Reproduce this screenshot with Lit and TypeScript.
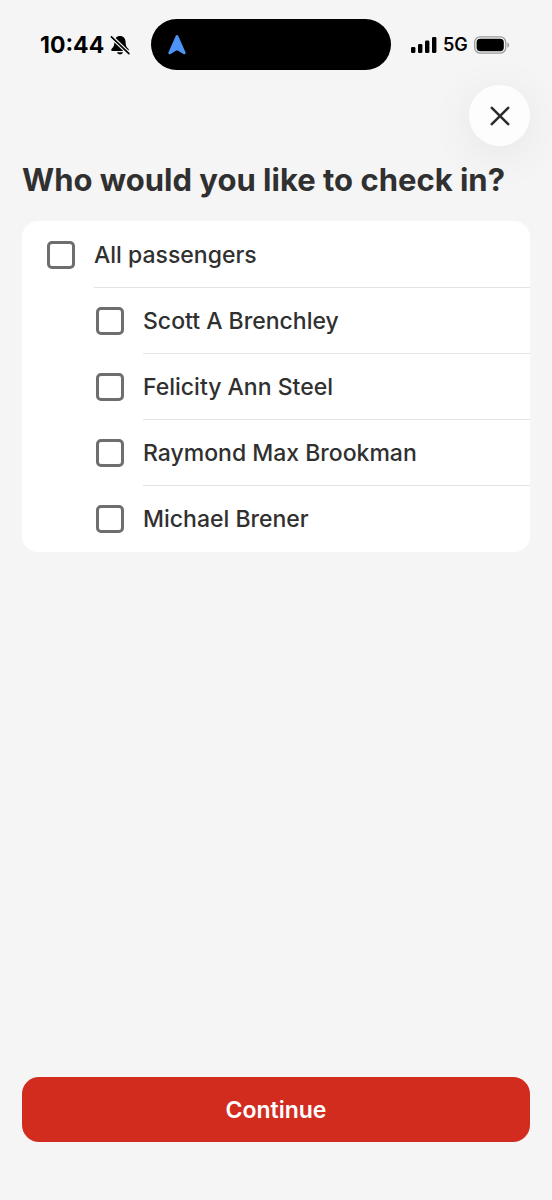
import { LitElement, html, css } from "lit";
import { customElement, state } from "lit/decorators.js";

@customElement("status-bar")
class StatusBar extends LitElement {
  static styles = css`
    :host {
      display: grid;
      grid-template-columns: 1fr 240px 1fr;
      align-items: center;
      padding: 19px 10px 0 0;
      color: #000;
      font-weight: 600;
    }
    .side {
      display: flex;
      align-items: center;
    }
    .left {
      padding-left: 40px;
      gap: 6px;
    }
    .right {
      padding-left: 20px;
      gap: 6px;
    }
    .time {
      font-size: 23px;
      line-height: 28px;
      font-weight: 700;
    }
    .network {
      font-size: 18px;
      line-height: 28px;
    }
    .island {
      display: flex;
      align-items: center;
      height: 51px;
      padding-left: 16px;
      border-radius: 26px;
      background: #000;
    }
    svg {
      display: block;
      flex: none;
    }
  `;

  render() {
    return html`
      <div class="side left">
        <span class="time">10:44</span>
        <svg width="20" height="20" viewBox="0 0 20 20" aria-label="Silent mode">
          <path d="M10 1C6.4 1 4.6 3.5 4.4 7C4.2 10.8 3.6 12 1.7 13.7C.7 14.7 1.1 16 2.4 16H17.6C18.9 16 19.3 14.7 18.3 13.7C16.4 12 15.8 10.8 15.6 7C15.4 3.5 13.6 1 10 1Z" fill="#000" />
          <path d="M7 17.2H13C12.6 18.6 11.4 19.4 10 19.4S7.4 18.6 7 17.2Z" fill="#000" />
          <path d="M1.4 1.8L18.9 18.6" stroke="#f5f5f5" stroke-width="4" />
          <path d="M1.4 1.8L18.9 18.6" stroke="#000" stroke-width="1.6" stroke-linecap="round" />
        </svg>
      </div>
      <div class="island">
        <svg width="20" height="22" viewBox="0 0 20 22" aria-label="Location in use">
          <path d="M8.7 2C9.2 .7 10.8 .7 11.3 2L18.5 18.2C19.1 19.8 17.8 20.8 16.4 20L11.2 16.8C10.4 16.3 9.6 16.3 8.8 16.8L3.6 20C2.2 20.8 .9 19.8 1.5 18.2Z" fill="#4c94f8" />
        </svg>
      </div>
      <div class="side right">
        <svg width="26" height="18" viewBox="0 0 26 18" aria-label="Signal strength">
          <rect x="0" y="11" width="4.4" height="6" rx="1.3" />
          <rect x="7" y="8" width="4.4" height="9" rx="1.3" />
          <rect x="14" y="4.6" width="4.4" height="12.4" rx="1.3" />
          <rect x="21" y="1" width="4.4" height="16" rx="1.3" />
        </svg>
        <span class="network">5G</span>
        <svg width="36" height="18" viewBox="0 0 36 18" aria-label="Battery">
          <rect x=".7" y=".9" width="31" height="16.2" rx="5.2" fill="none" stroke="#999" stroke-width="1.3" />
          <rect x="2.6" y="2.8" width="27.2" height="12.4" rx="3.6" fill="#000" />
          <path d="M33.4 6.4C35.6 7.4 35.6 10.6 33.4 11.6Z" fill="#999" />
        </svg>
      </div>
    `;
  }
}

@customElement("app-root")
class AppRoot extends LitElement {
  static styles = css`
    :host {
      display: flex;
      flex-direction: column;
      min-height: 100vh;
      box-sizing: border-box;
      background: #f5f5f5;
      color: #303030;
      font-family: Inter, "Liberation Sans", sans-serif;
    }
    .toolbar {
      display: flex;
      justify-content: flex-end;
      padding: 15px 22px 0;
    }
    .close {
      display: grid;
      place-items: center;
      width: 61px;
      height: 61px;
      padding: 0;
      border: 0;
      border-radius: 50%;
      background: #fdfdfd;
      box-shadow: 0 8px 48px rgba(0, 0, 0, 0.07);
      cursor: pointer;
    }
    main {
      flex: 1;
      padding: 14px 22px 24px;
    }
    h1 {
      margin: 0 0 21px;
      font-size: 31px;
      line-height: 40px;
      font-weight: 700;
    }
    .card {
      padding-top: 1px;
      border-radius: 16px;
      background: #fff;
    }
    ul {
      margin: 0;
      padding: 0 0 0 49px;
      list-style: none;
    }
    .row {
      display: flex;
      height: 66px;
      padding-left: 25px;
      gap: 19px;
      align-items: center;
      cursor: pointer;
    }
    .name {
      display: flex;
      flex: 1;
      align-items: center;
      align-self: stretch;
      box-sizing: border-box;
      border-bottom: 1px solid #e3e3e3;
      font-size: 23px;
      line-height: 28px;
      font-weight: 500;
    }
    li:last-child .name {
      border-bottom-color: transparent;
    }
    input {
      appearance: none;
      box-sizing: border-box;
      width: 28px;
      height: 28px;
      margin: 0;
      border: 3px solid #6e6e6e;
      border-radius: 5px;
      background: #fff;
    }
    input:checked {
      background: #6e6e6e;
      box-shadow: inset 0 0 0 4px #fff;
    }
    footer {
      padding: 0 22px 58px;
    }
    .continue {
      display: block;
      width: 100%;
      height: 65px;
      border: 0;
      border-radius: 17px;
      background: #d22c1f;
      color: #fff;
      font-family: inherit;
      font-size: 23px;
      line-height: 28px;
      font-weight: 600;
      cursor: pointer;
    }
  `;

  private passengers = ["Scott A Brenchley", "Felicity Ann Steel", "Raymond Max Brookman", "Michael Brener"];

  @state() private selected: string[] = [];

  private toggle(name: string) {
    this.selected = this.selected.includes(name)
      ? this.selected.filter((n) => n !== name)
      : [...this.selected, name];
  }

  private toggleAll() {
    this.selected = this.selected.length === this.passengers.length ? [] : [...this.passengers];
  }

  render() {
    return html`
      <status-bar></status-bar>
      <div class="toolbar">
        <button class="close" type="button" aria-label="Close">
          <svg width="20" height="20" viewBox="0 0 20 20">
            <path d="M1.8 1.8L18.2 18.2M18.2 1.8L1.8 18.2" stroke="#2c2c2e" stroke-width="2.6" stroke-linecap="round" />
          </svg>
        </button>
      </div>
      <main>
        <h1>Who would you like to check in?</h1>
        <div class="card">
          <label class="row">
            <input
              type="checkbox"
              .checked=${this.selected.length === this.passengers.length}
              @change=${this.toggleAll}
            />
            <span class="name">All passengers</span>
          </label>
          <ul>
            ${this.passengers.map(
              (name) => html`<li>
                <label class="row">
                  <input
                    type="checkbox"
                    .checked=${this.selected.includes(name)}
                    @change=${() => this.toggle(name)}
                  />
                  <span class="name">${name}</span>
                </label>
              </li>`
            )}
          </ul>
        </div>
      </main>
      <footer>
        <button class="continue" type="button">Continue</button>
      </footer>
    `;
  }
}
